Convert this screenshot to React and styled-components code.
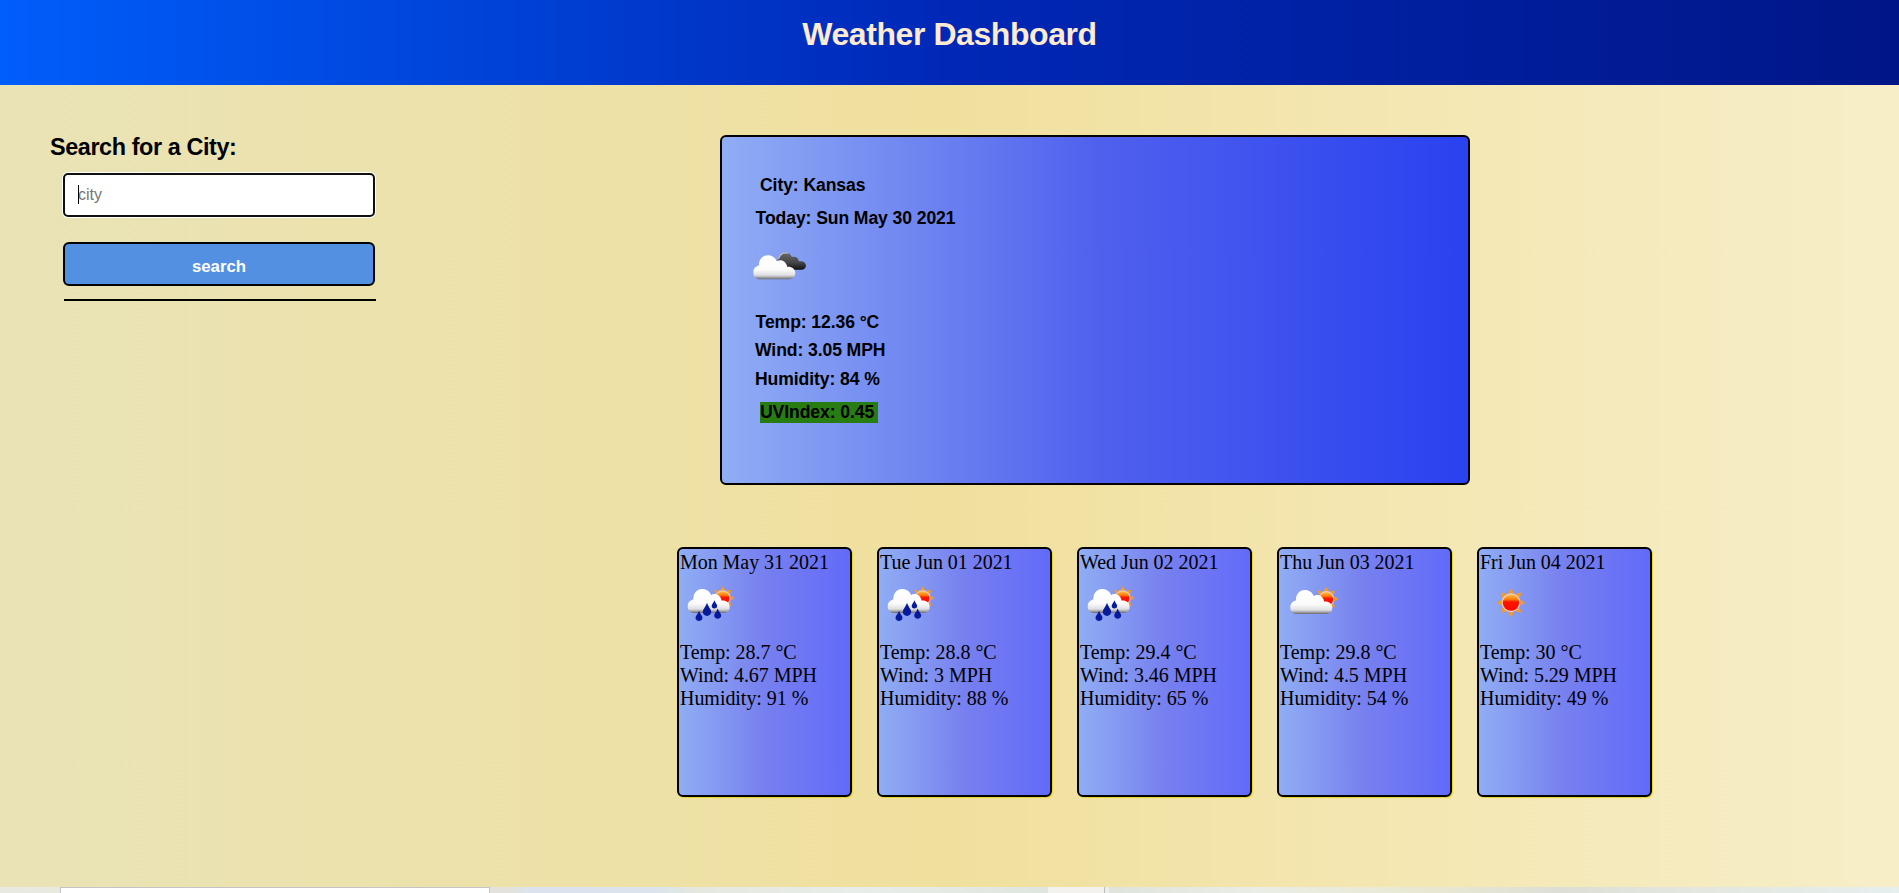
import React from "react";
import styled, { createGlobalStyle } from "styled-components";

const GlobalStyle = createGlobalStyle`
  * { box-sizing: border-box; }
  body { margin: 0; overflow: hidden; }
`;

const Page = styled.div`
  display: flex;
  flex-direction: column;
  height: 893px;
  width: 1899px;
  font-family: "Liberation Sans", Arial, sans-serif;
  color: #000;
`;

const Header = styled.header`
  height: 85px;
  flex: none;
  padding-top: 16px;
  text-align: center;
  background: linear-gradient(to right, #005efb 0%, #0028b6 50%, #001687 100%);
`;

const Title = styled.h1`
  margin: 0;
  font-size: 32px;
  letter-spacing: -0.43px;
  line-height: 37px;
  color: #ffebd2;
`;

const Main = styled.main`
  flex: 1;
  display: flex;
  background: linear-gradient(to right, #e9e3b6 0%, #f0e09e 50%, #f7eec8 100%);
`;

const Sidebar = styled.aside`
  width: 677px;
  flex: none;
  padding: 48px 0 0 50px;
`;

const SearchHeading = styled.h2`
  margin: 0;
  font-size: 23.4px;
  letter-spacing: -0.4px;
  line-height: 28px;
`;

const SearchForm = styled.div`
  width: 312px;
  margin: 12px 0 0 13px;
`;

const InputWrap = styled.div`
  position: relative;
  height: 44px;
`;

const CityInput = styled.input`
  display: block;
  width: 312px;
  height: 44px;
  padding: 0 13px;
  border: 2px solid #101010;
  border-radius: 5px;
  outline: none;
  box-shadow: 0 0 0 1px #fff;
  background: #fff;
  font: 16px "Liberation Sans", Arial, sans-serif;
  caret-color: transparent;
  &::placeholder { color: #757575; opacity: 1; }
`;

const Caret = styled.span`
  position: absolute;
  left: 15px;
  top: 12px;
  width: 1px;
  height: 19px;
  background: #000;
`;

const SearchButton = styled.button`
  display: block;
  width: 312px;
  height: 44px;
  margin-top: 25px;
  padding: 5px 0 0;
  border: 2px solid #000;
  border-radius: 6px;
  background: #5490e2;
  color: #fff;
  font: bold 16.8px "Liberation Sans", Arial, sans-serif;
`;

const Divider = styled.hr`
  width: 312px;
  height: 2px;
  margin: 13px 0 0 1px;
  border: 0;
  background: #000;
`;

const Results = styled.section`
  flex: 1;
  padding-top: 50px;
`;

const CurrentCard = styled.article`
  width: 750px;
  height: 350px;
  margin-left: 43px;
  padding: 38px 0 0 33px;
  border: 2px solid #000;
  border-radius: 6px;
  background: linear-gradient(to right, #90adf4 0%, #5061ee 50%, #2a41ef 100%);
  font-weight: bold;
  font-size: 17.6px;
  letter-spacing: -0.1px;
  line-height: 20px;
`;

const CurrentLine = styled.div`
  height: 20px;
  margin-top: ${(p) => p.$gap || 0}px;
  margin-left: ${(p) => p.$indent || 0}px;
`;

const CurrentIcon = styled.div`
  height: 72px;
  margin: 12px 0 0 -10px;
`;

const UvIndex = styled.div`
  width: 118px;
  height: 21px;
  margin: 13px 0 0 5px;
  white-space: pre;
  background: #277d12;
`;

const Forecast = styled.div`
  display: flex;
  gap: 25px;
  margin-top: 62px;
`;

const DayCard = styled.article`
  width: 175px;
  height: 250px;
  padding: 2px 1px 1px;
  border: 2px solid #000;
  border-radius: 6px;
  background: linear-gradient(to right, #90adf4 0%, #7780ef 50%, #626afa 100%);
  box-shadow: 1px 1px 1px #e6d42a;
  font-family: "Liberation Serif", "Times New Roman", serif;
  font-size: 20px;
  letter-spacing: -0.04px;
  line-height: 23px;
`;

const DayIcon = styled.div`
  height: 67px;
  margin: -1px 0 1px;
`;

const Glyph = styled.svg`
  display: block;
`;

const Taskbar = styled.footer`
  display: flex;
  flex: none;
  height: 6px;
  background: linear-gradient(
    to right,
    #e8e9df 0, #e3e3dc 510px, #dbe4ee 530px, #dbe4ed 650px, #e4e8df 700px,
    #e9ede9 860px, #dfe5df 1040px, #dfe4dc 1115px, #eaede5 1260px,
    #e8e8d2 1430px, #dddfd6 1560px, #e3e7df 1700px, #e6eeee 1899px
  );
`;

const TaskSearch = styled.div`
  width: 430px;
  margin-left: 60px;
  border: 1px solid #c4c4c8;
  border-bottom: 0;
  background: #fff;
`;

const TaskWindow = styled.div`
  width: 57px;
  margin-left: 558px;
  border-right: 1px solid #b9bdb9;
  background: #f3f2ef;
`;

const TaskEdge = styled.div`
  width: 4px;
  background: #eceeea;
`;

function Sun({ x, y, r, id }) {
  const rays = [];
  for (let i = 0; i < 8; i++) {
    rays.push(
      <path
        key={i}
        d={`M${-r * 0.22} ${-r * 0.66} L0 ${-r} L${r * 0.22} ${-r * 0.66} Z`}
        transform={`rotate(${i * 45})`}
        fill="#f59a23"
      />
    );
  }
  return (
    <g transform={`translate(${x} ${y})`}>
      <defs>
        <linearGradient id={id} x1="0" y1="0" x2="0" y2="1">
          <stop offset="0" stopColor="#ffc04a" />
          <stop offset="0.3" stopColor="#ff7a08" />
          <stop offset="0.45" stopColor="#fb1500" />
          <stop offset="1" stopColor="#ff0500" />
        </linearGradient>
      </defs>
      {rays}
      <circle r={r * 0.66} fill="#f9cfad" />
      <circle r={r * 0.57} fill={`url(#${id})`} />
    </g>
  );
}

function Cloud({ id, x, y }) {
  return (
    <g transform={`translate(${x} ${y})`}>
      <defs>
        <linearGradient id={id} x1="0" y1="0" x2="0" y2="24" gradientUnits="userSpaceOnUse">
          <stop offset="0" stopColor="#fff" />
          <stop offset="0.6" stopColor="#fbfbfb" />
          <stop offset="0.83" stopColor="#e0e0e2" />
          <stop offset="0.92" stopColor="#a8a8ac" />
          <stop offset="1" stopColor="#66666c" />
        </linearGradient>
      </defs>
      <path
        d="M6.5 24 C2.5 24 0 21.3 0 17.2 C0 13.6 2.2 11.2 5.6 10.4 C5.4 4.3 9 0 14.4 0 C19 0 22 2.4 23.4 6 C28 3.6 33 6.3 33.9 11.6 C38.7 11.2 42 14 42 17.8 C42 21.5 39.5 24 36 24 Z"
        fill={`url(#${id})`}
      />
    </g>
  );
}

function Drop({ x, y, w, h }) {
  return (
    <path
      transform={`translate(${x} ${y}) scale(${w} ${h})`}
      d="M0 -0.5 C0.15 -0.18 0.5 0 0.5 0.2 C0.5 0.62 -0.5 0.62 -0.5 0.2 C-0.5 0 -0.15 -0.18 0 -0.5 Z"
      fill="#07199c"
    />
  );
}

function WeatherIcon({ kind, id }) {
  return (
    <Glyph width="67" height="67" viewBox="0 0 67 67">
      {kind === "rain" && (
        <>
          <Sun x={42.8} y={25} r={11.8} id={`${id}-s`} />
          <Cloud x={7.7} y={16} id={`${id}-c`} />
          <Drop x={19} y={42.8} w={7} h={10} />
          <Drop x={27} y={36.2} w={8.5} h={13} />
          <Drop x={34.4} y={31.3} w={5.5} h={8} />
          <Drop x={37.7} y={40.6} w={7} h={10} />
        </>
      )}
      {kind === "cloudSun" && (
        <>
          <Sun x={46.3} y={26} r={12} id={`${id}-s`} />
          <Cloud x={10.3} y={17} id={`${id}-c`} />
        </>
      )}
      {kind === "sun" && <Sun x={31} y={29.7} r={14.3} id={`${id}-s`} />}
      {kind === "clouds" && (
        <>
          <defs>
            <linearGradient id={`${id}-d`} x1="0" y1="0" x2="0" y2="1">
              <stop offset="0" stopColor="#6a6a6c" />
              <stop offset="0.6" stopColor="#444446" />
              <stop offset="1" stopColor="#111" />
            </linearGradient>
          </defs>
          <path
            d="M37 29.7 C32 28 31 19 35 14.8 C38.5 11.3 44.5 11.8 46.8 17 C50.5 15.7 53.5 18 53.8 21.3 C58 20.5 61 22.7 61 25.7 C61 28 59 29.7 56.5 29.7 Z"
            fill={`url(#${id}-d)`}
          />
          <path d="M33.3 19 C35 14 38.5 12.2 43 13.2" fill="none" stroke="#c0c2c6" strokeWidth="1.3" />
          <Cloud x={8.3} y={15.2} id={`${id}-c`} />
        </>
      )}
    </Glyph>
  );
}

const days = [
  { date: "Mon May 31 2021", icon: "rain", temp: "28.7", wind: "4.67", humidity: "91" },
  { date: "Tue Jun 01 2021", icon: "rain", temp: "28.8", wind: "3", humidity: "88" },
  { date: "Wed Jun 02 2021", icon: "rain", temp: "29.4", wind: "3.46", humidity: "65" },
  { date: "Thu Jun 03 2021", icon: "cloudSun", temp: "29.8", wind: "4.5", humidity: "54" },
  { date: "Fri Jun 04 2021", icon: "sun", temp: "30", wind: "5.29", humidity: "49" },
];

export default function App() {
  return (
    <>
      <GlobalStyle />
      <Page>
        <Header>
          <Title>Weather Dashboard</Title>
        </Header>
        <Main>
          <Sidebar>
            <SearchHeading>Search for a City:</SearchHeading>
            <SearchForm>
              <InputWrap>
                <CityInput placeholder="city" />
                <Caret />
              </InputWrap>
              <SearchButton>search</SearchButton>
              <Divider />
            </SearchForm>
          </Sidebar>
          <Results>
            <CurrentCard>
              <CurrentLine $indent={5}>City: Kansas</CurrentLine>
              <CurrentLine $gap={13} $indent={0.6}>Today: Sun May 30 2021</CurrentLine>
              <CurrentIcon>
                <WeatherIcon kind="clouds" id="now" />
              </CurrentIcon>
              <CurrentLine $indent={0.6}>Temp: 12.36 °C</CurrentLine>
              <CurrentLine $gap={8}>Wind: 3.05 MPH</CurrentLine>
              <CurrentLine $gap={9}>Humidity: 84 %</CurrentLine>
              <UvIndex>{"UVIndex: 0.45 "}</UvIndex>
            </CurrentCard>
            <Forecast>
              {days.map((d, i) => (
                <DayCard key={d.date}>
                  <div>{d.date}</div>
                  <DayIcon>
                    <WeatherIcon kind={d.icon} id={`day${i}`} />
                  </DayIcon>
                  <div>Temp: {d.temp} °C</div>
                  <div>Wind: {d.wind} MPH</div>
                  <div>Humidity: {d.humidity} %</div>
                </DayCard>
              ))}
            </Forecast>
          </Results>
        </Main>
        <Taskbar>
          <TaskSearch />
          <TaskWindow />
          <TaskEdge />
        </Taskbar>
      </Page>
    </>
  );
}
